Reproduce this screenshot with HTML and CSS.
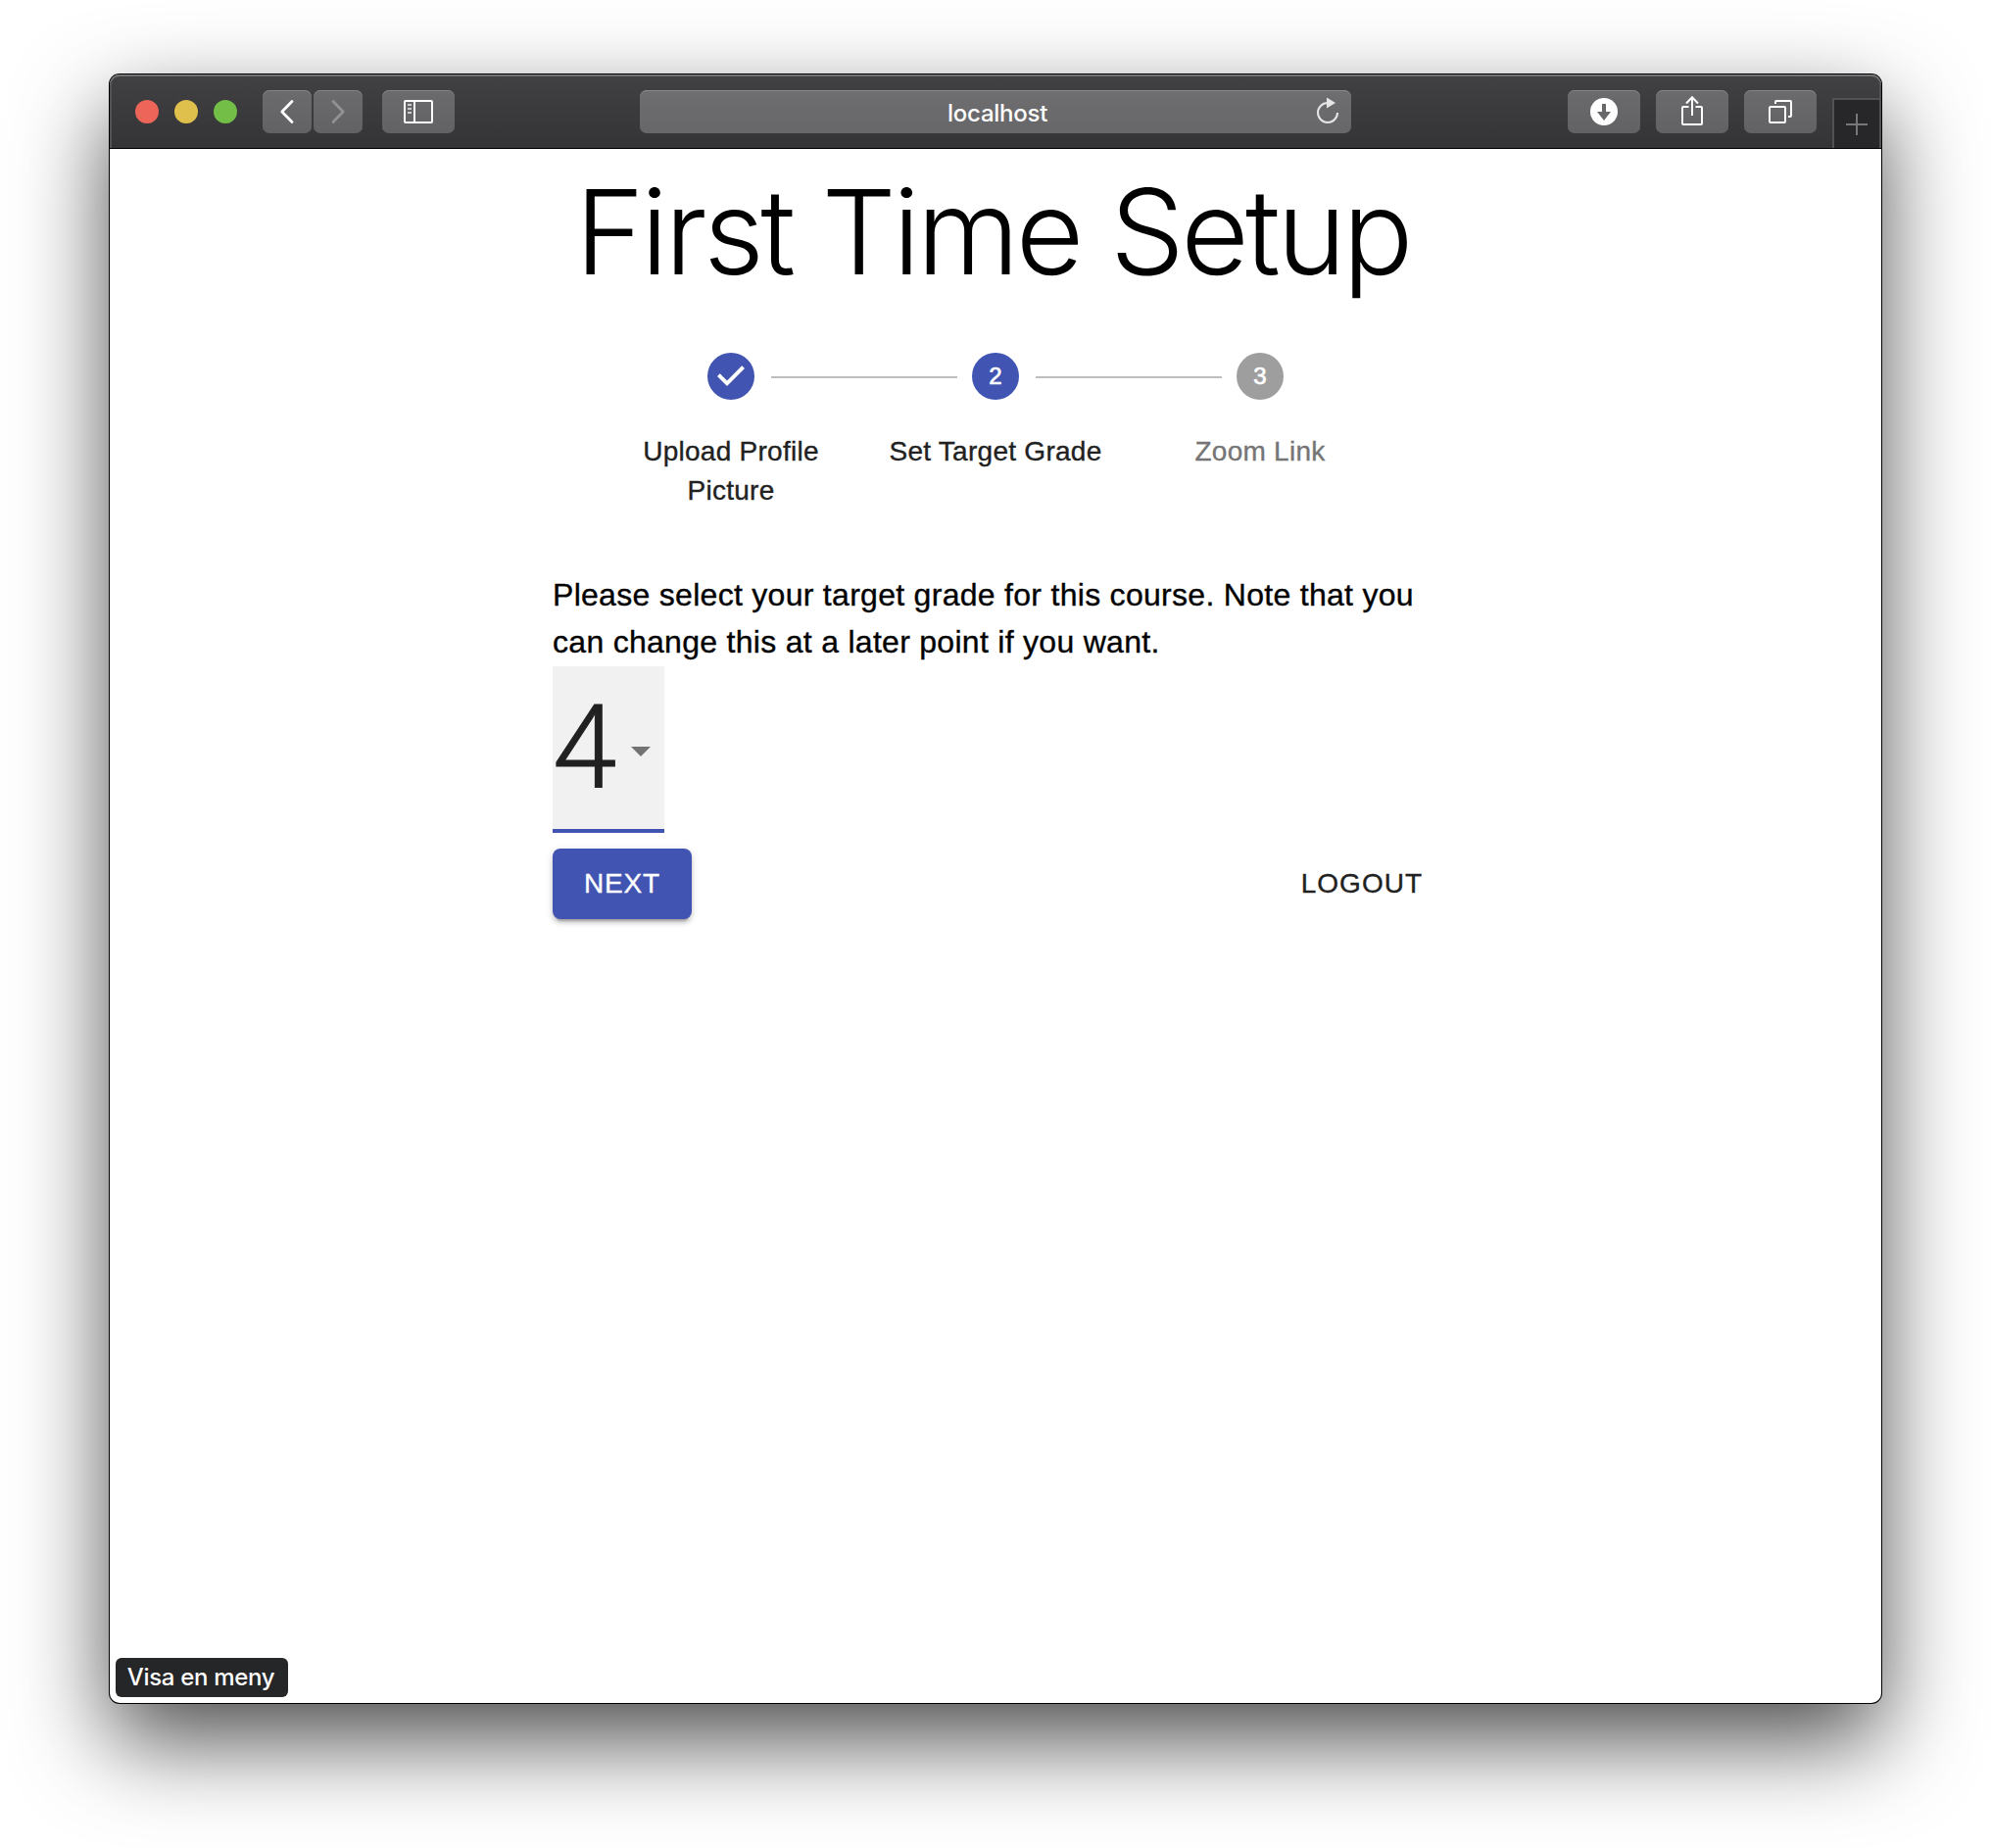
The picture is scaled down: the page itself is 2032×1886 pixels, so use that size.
FILE: index.html
```html
<!DOCTYPE html>
<html lang="en">
<head>
<meta charset="utf-8">
<title>First Time Setup</title>
<link rel="stylesheet" href="styles.css">
</head>
<body>
<div class="window">
  <header class="toolbar">
    <div class="lights"><span class="light red"></span><span class="light yellow"></span><span class="light green"></span></div>
    <div class="nav">
      <button class="tool narrow" aria-label="Back"><svg width="50" height="44" viewBox="0 0 50 44"><path d="M30 11.500L19.800 22L30 32.500" fill="none" stroke="#fff" stroke-width="2.800" stroke-linecap="round" stroke-linejoin="round"/></svg></button>
      <button class="tool narrow" aria-label="Forward"><svg width="50" height="44" viewBox="0 0 50 44"><path d="M20 11.500L30.200 22L20 32.500" fill="none" stroke="#929294" stroke-width="2.800" stroke-linecap="round" stroke-linejoin="round"/></svg></button>
    </div>
    <button class="tool" aria-label="Sidebar"><svg width="74" height="44" viewBox="0 0 74 44"><rect x="23" y="11" width="28" height="22" rx="1" fill="none" stroke="#fff" stroke-width="2"/><path d="M33 11V33" stroke="#fff" stroke-width="2"/><path d="M26 15H30M26 19H30M26 23H30" stroke="#ccc" stroke-width="2"/></svg></button>
    <div class="address"><span class="host">localhost</span>
      <svg class="reload" width="26" height="30" viewBox="0 0 26 30"><path d="M13 6A10 10 0 1 0 23 16" fill="none" stroke="#e6e6e6" stroke-width="2"/><path d="M12 .5L21 6L12 11.500Z" fill="#e6e6e6"/></svg>
    </div>
    <div class="actions">
      <button class="tool" aria-label="Downloads"><svg width="74" height="44" viewBox="0 0 74 44"><circle cx="37" cy="22" r="14" fill="#fff"/><path d="M35 14h4v8h5l-7 9l-7-9h5z" fill="#68686a"/></svg></button>
      <button class="tool" aria-label="Share"><svg width="74" height="44" viewBox="0 0 74 44"><path d="M33.500 17H28a1 1 0 0 0-1 1V34a1 1 0 0 0 1 1H46a1 1 0 0 0 1-1V18a1 1 0 0 0-1-1H40.500M37 26V7M31 13.500L37 7.200L43 13.500" fill="none" stroke="#fff" stroke-width="2"/></svg></button>
      <button class="tool" aria-label="Tabs"><svg width="74" height="44" viewBox="0 0 74 44"><rect x="26" y="17" width="16" height="16" rx="1" fill="none" stroke="#fff" stroke-width="2"/><path d="M32 14V12a1 1 0 0 1 1-1H47a1 1 0 0 1 1 1V26a1 1 0 0 1-1 1H45" fill="none" stroke="#fff" stroke-width="2"/></svg></button>
    </div>
    <button class="newtab" aria-label="New tab"><svg width="22" height="22" viewBox="0 0 22 22"><path d="M11 0V22M0 11H22" stroke="#777" stroke-width="2"/></svg></button>
  </header>
  <main class="page">
    <h1 class="title">First Time Setup</h1>
    <ol class="stepper">
      <li class="step"><span class="dot"><svg width="48" height="48" viewBox="0 0 24 24"><path d="M12 0a12 12 0 1 0 0 24a12 12 0 0 0 0-24zm-2 17l-5-5 1.400-1.400 3.600 3.600 7.600-7.600L19 8l-9 9z" fill="#4154b1"/></svg></span><span class="label">Upload Profile Picture</span></li>
      <li class="step"><span class="dot active">2</span><span class="label">Set Target Grade</span></li>
      <li class="step"><span class="dot pending">3</span><span class="label muted">Zoom Link</span></li>
    </ol>
    <p class="hint">Please select your target grade for this course. Note that you can change this at a later point if you want.</p>
    <div class="select"><span class="value">4</span><svg class="arrow" width="20" height="10" viewBox="0 0 20 10"><path d="M0 0H20L10 10Z" fill="#737373"/></svg></div>
    <div class="buttons"><button class="next">NEXT</button><button class="logout">LOGOUT</button></div>
  </main>
  <div class="status">Visa en meny</div>
</div>
</body>
</html>
```
FILE: styles.css
```css
* { box-sizing: border-box; }
body {
  height: 1886px;
  margin: 0;
  padding-top: 76px;
  overflow: hidden;
  background: #fff;
  font-family: "Liberation Sans", sans-serif;
}
button { border: 0; padding: 0; background: none; font: inherit; }
svg { display: block; }

.window {
  position: relative;
  width: 1808px;
  height: 1662px;
  margin: 0 auto;
  border-radius: 10px;
  background: #fff;
  box-shadow: 0 0 0 1px #000, 0 38px 94px rgba(0, 0, 0, .7);
}
.toolbar {
  display: flex;
  align-items: flex-start;
  height: 76px;
  padding: 16px 0 0 26px;
  border-bottom: 1px solid #000;
  border-radius: 10px 10px 0 0;
  background: linear-gradient(#414143, #343436);
  box-shadow: inset 0 2px 0 #727274, inset 2px 0 0 #525254, inset -2px 0 0 #525254;
}
.lights { display: flex; gap: 16px; padding-top: 10px; }
.light { width: 24px; height: 24px; border-radius: 50%; }
.red { background: #ed6458; }
.yellow { background: #e0c04c; }
.green { background: #72be47; }
.nav { display: flex; gap: 2px; margin: 0 20px 0 26px; }
.tool {
  width: 74px;
  height: 44px;
  border-radius: 7px;
  background: linear-gradient(#6b6b6d, #626264);
  box-shadow: inset 0 1px 0 #858587;
}
.narrow { width: 50px; }
.address {
  display: flex;
  align-items: center;
  width: 726px;
  height: 44px;
  margin-left: 189px;
  padding: 0 11px 0 314px;
  border-radius: 7px;
  background: linear-gradient(#6e6e70, #676769);
  box-shadow: inset 0 1px 0 #8b8b8d;
  color: #fff;
  font: 500 24px/44px Inter, sans-serif;
}
.host { letter-spacing: -.25px; padding-top: 3px; }
.reload { margin: 0 0 0 auto; }
.actions { display: flex; gap: 16px; margin-left: 221px; }
.newtab {
  display: flex;
  align-items: center;
  justify-content: center;
  width: 50px;
  height: 51px;
  margin: 8px 0 0 16px;
  border: 2px solid #525254;
  border-width: 2px 2px 0 2px;
  background: #272729;
}

.page { width: 904px; margin: 0 auto; padding-top: 13px; }
.title {
  height: 147px;
  margin: 0 3px 0 -3px;
  color: #000;
  font: 300 120px/144px Inter, sans-serif;
  letter-spacing: -3.6px;
  text-align: center;
  white-space: nowrap;
}
.stepper { display: flex; margin: 0; padding: 48px 47px; list-style: none; }
.step { position: relative; flex: 1; display: flex; flex-direction: column; align-items: center; gap: 33px; }
.step + .step::before {
  content: "";
  position: absolute;
  top: 24px;
  left: calc(-50% + 41px);
  right: calc(50% + 39px);
  height: 2px;
  background: #bdbdbd;
}
.dot {
  width: 48px;
  height: 48px;
  border-radius: 50%;
  color: #fff;
  font: 24px/48px "Liberation Sans", sans-serif;
  text-align: center;
  -webkit-text-stroke: .7px #fff;
}
.active { background: #4154b1; }
.pending { background: #9e9e9e; }
.label {
  color: #212121;
  font-size: 28px;
  line-height: 40px;
  letter-spacing: .27px;
  text-align: center;
  -webkit-text-stroke: .35px currentColor;
}
.muted { color: #757575; }
.hint {
  margin: 14px 0 1px;
  color: #000;
  font-size: 32px;
  line-height: 48px;
  letter-spacing: .29px;
  -webkit-text-stroke: .35px currentColor;
}
.select {
  display: flex;
  align-items: center;
  width: 114px;
  height: 170px;
  border-bottom: 4px solid #4154b1;
  background: #f1f1f1;
}
.value {
  width: 80px;
  color: #212121;
  font: 300 118px/166px Roboto, sans-serif;
  -webkit-text-stroke: 1px currentColor;
}
.arrow { margin-top: 8px; }
.buttons { display: flex; justify-content: space-between; margin-top: 16px; }
.next, .logout {
  height: 72px;
  font-size: 28px;
  line-height: 72px;
  letter-spacing: .8px;
  -webkit-text-stroke: .35px currentColor;
}
.next {
  width: 142px;
  border-radius: 8px;
  background: #4154b1;
  color: #fff;
  box-shadow: 0 6px 2px -4px rgba(0, 0, 0, .2), 0 4px 4px rgba(0, 0, 0, .14), 0 2px 10px rgba(0, 0, 0, .12);
}
.logout { padding: 0 16px; color: #212121; letter-spacing: 1px; }
.status {
  position: absolute;
  left: 6px;
  bottom: 6px;
  width: 176px;
  height: 40px;
  padding-right: 2px;
  border-radius: 6px;
  background: #252628;
  color: #fff;
  font: 500 24px/40px Inter, sans-serif;
  letter-spacing: -.3px;
  text-align: center;
}
```
